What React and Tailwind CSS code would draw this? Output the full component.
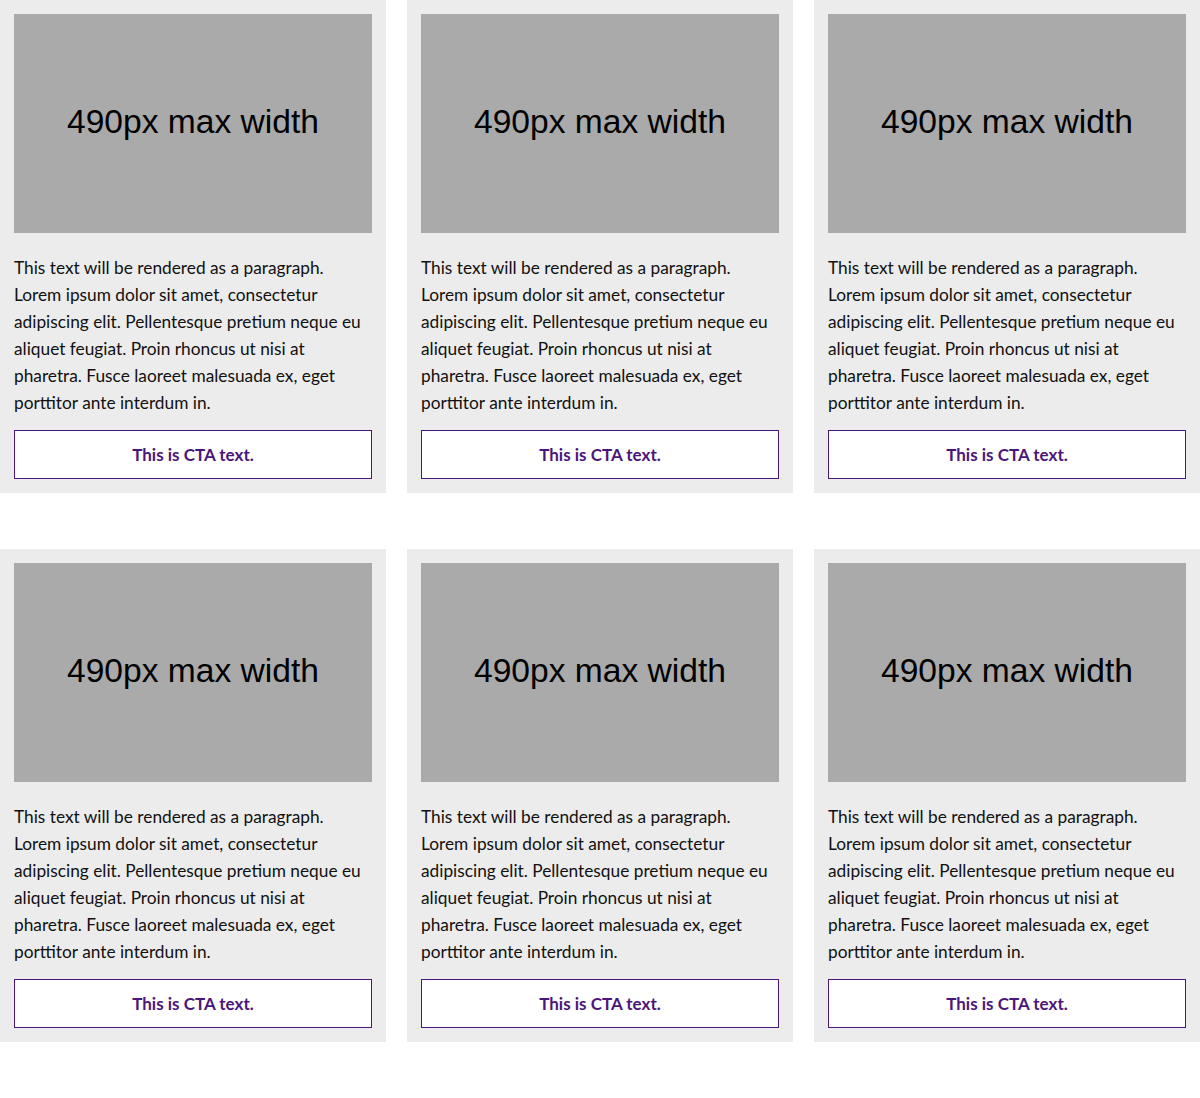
import React from 'react';

// body copy broken the same way the design comp breaks it
const LINES = [
  'This text will be rendered as a paragraph.',
  'Lorem ipsum dolor sit amet, consectetur',
  'adipiscing elit. Pellentesque pretium neque eu',
  'aliquet feugiat. Proin rhoncus ut nisi at',
  'pharetra. Fusce laoreet malesuada ex, eget',
  'porttitor ante interdum in.',
];

const Card = () => {
  return (
    <div className="bg-[#ececec] p-[14px] flex flex-col">
      <div className="h-[219px] bg-[#aaaaaa] flex items-center justify-center pb-[3px]">
        <span className="text-[33.6px] text-black font-['Liberation_Sans',Arial,sans-serif]">490px max width</span>
      </div>
      <p className="mt-[21px] text-[17.3px] leading-[27px] text-[#111] whitespace-nowrap font-['Lato',sans-serif]">
        {LINES.map((line, i) => (
          <React.Fragment key={i}>
            {line}
            {i < LINES.length - 1 && <br />}
          </React.Fragment>
        ))}
      </p>
      <a
        href="#"
        className="mt-[14px] h-[49px] bg-white border border-[#4b1679] flex items-center justify-center text-[17px] font-bold text-[#4b1679] font-['Lato',sans-serif]"
      >
        This is CTA text.
      </a>
    </div>
  );
};

export default function App() {
  return (
    <div className="w-[1200px] bg-white pb-[56px]">
      <div className="grid grid-cols-3 gap-x-[21px] gap-y-[56px]">
        {[0, 1, 2, 3, 4, 5].map(i => (
          <Card key={i} />
        ))}
      </div>
    </div>
  );
}
